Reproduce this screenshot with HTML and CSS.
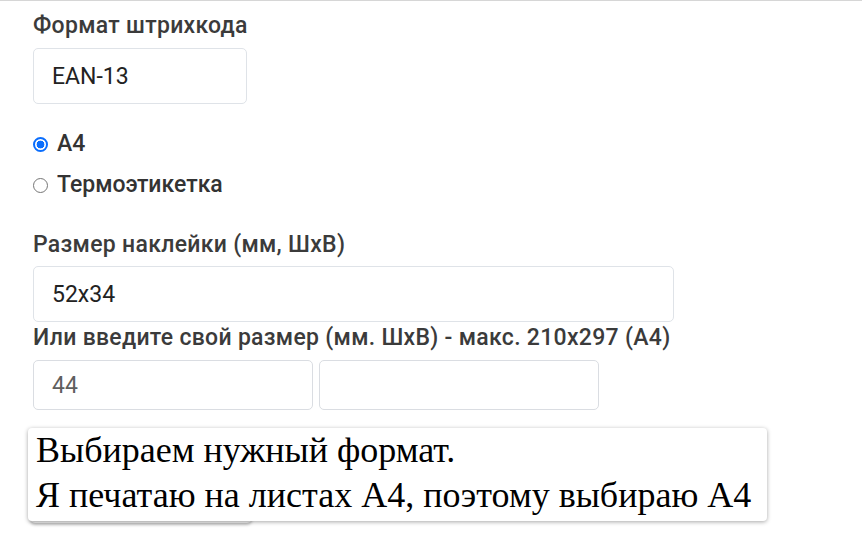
FILE: index.html
```html
<!DOCTYPE html>
<html lang="ru">
<head>
<meta charset="utf-8">
<link rel="stylesheet" href="styles.css">
</head>
<body>
<div class="page">
  <div class="form">
    <label class="label">Формат штрихкода</label>
    <div class="select select-sm">EAN-13</div>

    <div class="radios">
      <label class="radio"><span class="dot checked"></span>А4</label>
      <label class="radio"><span class="dot"></span>Термоэтикетка</label>
    </div>

    <label class="label label-size">Размер наклейки (мм, ШхВ)</label>
    <div class="select select-wide">52x34</div>

    <label class="label label-custom">Или введите свой размер (мм. ШхВ) - макс. 210x297 (А4)</label>
    <div class="pair">
      <div class="field">44</div>
      <div class="field"></div>
    </div>

    <div class="bottom">
      <div class="btn"></div>
      <div class="tip">Выбираем нужный формат.<br>Я печатаю на листах А4, поэтому выбираю А4</div>
    </div>
  </div>
</div>
</body>
</html>
```

FILE: styles.css
```css
html, body {
  margin: 0;
  padding: 0;
  background: #fff;
}

.page {
  width: 862px;
  height: 543px;
  border-top: 1px solid #d6d6d6;
  box-sizing: border-box;
  overflow: hidden;
}

.form {
  padding: 11px 0 0 33px;
  display: flex;
  flex-direction: column;
  align-items: flex-start;
  font-family: Roboto, sans-serif;
  color: #333;
}

.label {
  font-size: 23px;
  font-weight: 500;
  line-height: 28px;
  letter-spacing: 0.3px;
  color: #3b3b3b;
}

.select {
  box-sizing: border-box;
  height: 56px;
  margin-top: 8px;
  border: 1px solid #dfe3e8;
  border-radius: 5px;
  padding-left: 18px;
  display: flex;
  align-items: center;
  font-size: 23px;
  color: #222;
}

.select-sm {
  width: 214px;
}

.select-wide {
  width: 641px;
  margin-top: 7px;
}

.radios {
  margin-top: 26px;
  display: flex;
  flex-direction: column;
  gap: 13px;
}

.radio {
  display: flex;
  align-items: center;
  gap: 9px;
  font-size: 23px;
  font-weight: 500;
  line-height: 28px;
  color: #333;
}

.dot {
  box-sizing: border-box;
  width: 15px;
  height: 15px;
  border-radius: 50%;
  border: 1px solid #767676;
  background: #fff;
}

.dot.checked {
  border: 2px solid #0b6efd;
  background: radial-gradient(circle, #0b6efd 0 3.6px, #fff 4.2px);
}

.label-size {
  margin-top: 32px;
}

.label-custom {
  margin-top: 2px;
}

.pair {
  margin-top: 8px;
  display: flex;
  gap: 6px;
}

.field {
  box-sizing: border-box;
  width: 280px;
  height: 50px;
  border: 1px solid #dadde2;
  border-radius: 5px;
  padding-left: 18px;
  display: flex;
  align-items: center;
  font-size: 23px;
  color: #5f5f5f;
}

.bottom {
  position: relative;
  margin-top: 18px;
  margin-left: -5px;
  width: 740px;
  height: 96px;
}

.btn {
  position: absolute;
  left: 2px;
  top: 2px;
  width: 222px;
  height: 93px;
  border-radius: 5px;
  background: #f0f0f0;
  box-shadow: 0 2px 3px rgba(0, 0, 0, 0.25);
}

.tip {
  position: absolute;
  left: 0;
  top: 0;
  width: 739px;
  height: 93px;
  box-sizing: border-box;
  padding: 0 0 0 8px;
  background: #fff;
  border-radius: 4px;
  box-shadow: 0 1px 4px rgba(0, 0, 0, 0.35);
  font-family: "Liberation Serif", serif;
  font-size: 36px;
  line-height: 45px;
  color: #000;
}
```
